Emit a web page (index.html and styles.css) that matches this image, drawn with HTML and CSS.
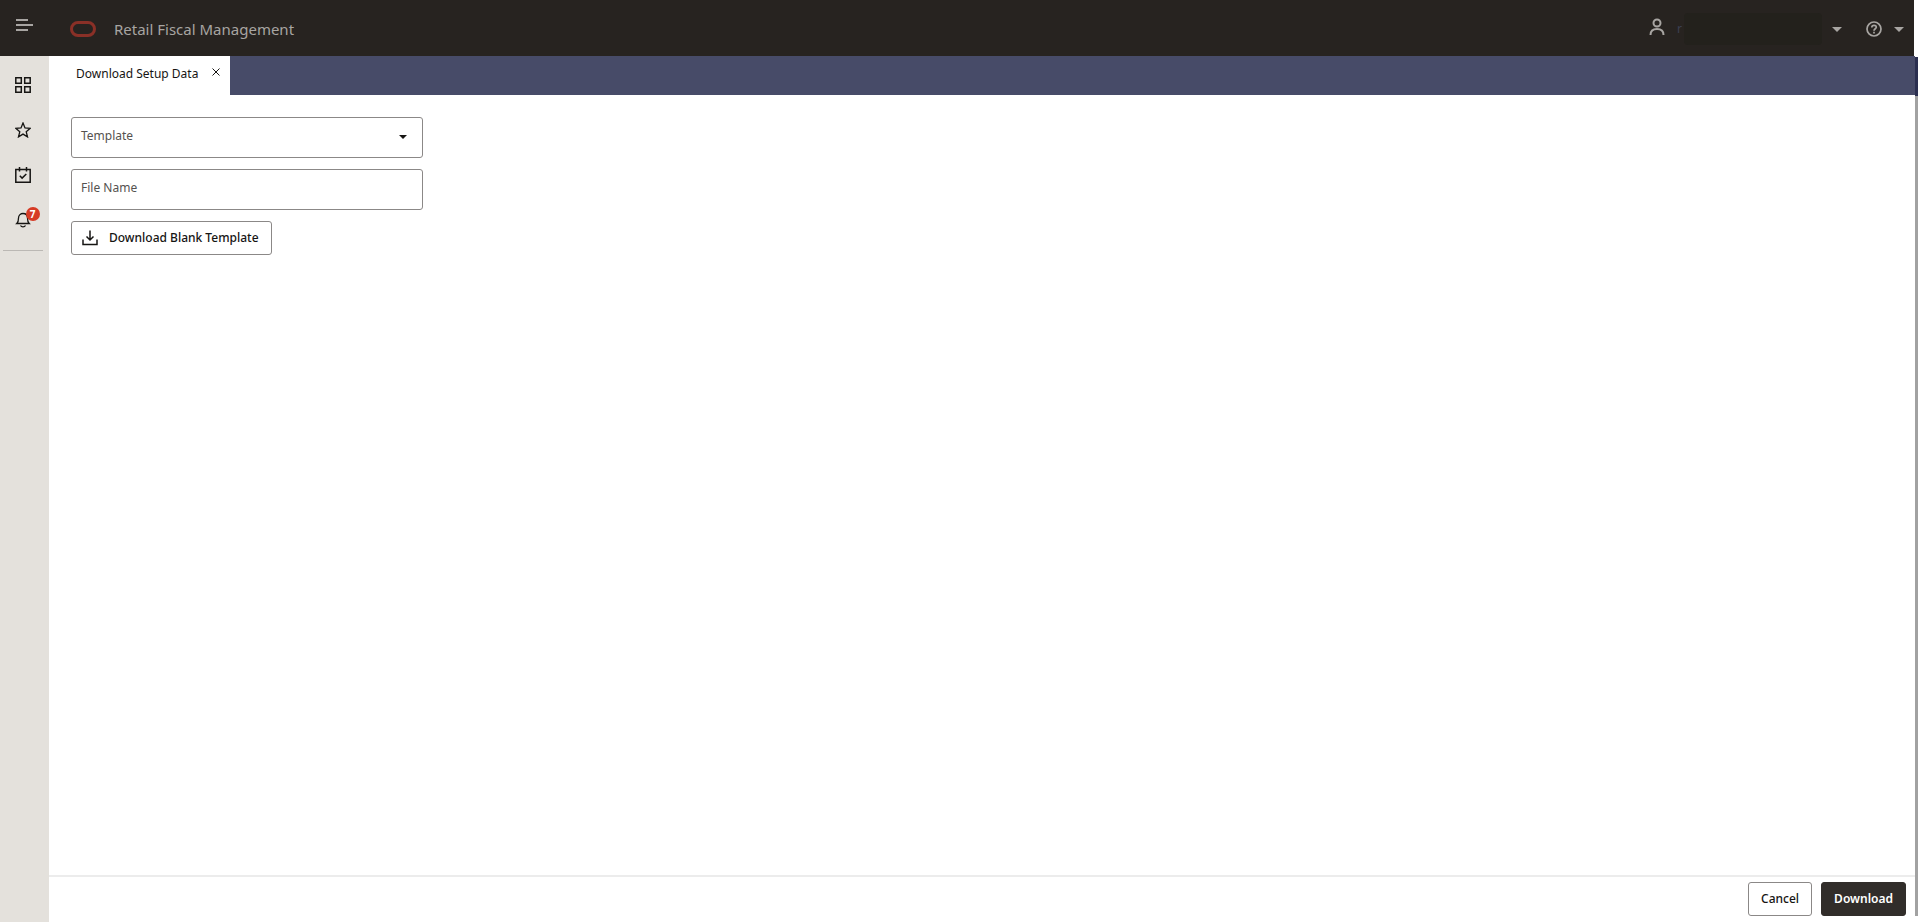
FILE: index.html
```html
<!DOCTYPE html>
<html lang="en">
<head>
    <meta charset="UTF-8">
    <meta name="viewport" content="width=device-width, initial-scale=1.0">
    <title>Retail Fiscal Management</title>
    <link rel="stylesheet" href="styles.css">
</head>
<body>
    <div class="app">
        <header class="header">
            <button type="button" class="icon-button menu-button" aria-label="Menu">
                <svg width="18" height="14" viewBox="0 0 18 14" fill="none" stroke="currentColor" stroke-width="2">
                    <path d="M0 2h12M0 7h17M0 12h12"/>
                </svg>
            </button>
            <svg class="logo" width="26" height="16" viewBox="0 0 26 16" fill="none" stroke="#8a3027" stroke-width="3">
                <rect x="1.5" y="1.5" width="23" height="13" rx="6.5"/>
            </svg>
            <h1 class="title">Retail Fiscal Management</h1>
            <button type="button" class="icon-button user-button" aria-label="User menu">
                <svg class="user-icon" width="16" height="18" viewBox="0 0 16 18" fill="none" stroke="currentColor" stroke-width="2">
                    <circle cx="8" cy="5" r="3.5"/>
                    <path d="M1.5 17c0-4 2.500-6 6.500-6s6.500 2 6.500 6"/>
                </svg>
                <span class="user-name">r</span>
                <span class="user-mask"></span>
                <svg class="caret" width="10" height="5" viewBox="0 0 10 5"><path d="M0 0h10L5 5z" fill="currentColor"/></svg>
            </button>
            <button type="button" class="icon-button help-button" aria-label="Help">
                <svg width="16" height="16" viewBox="0 0 16 16" fill="none" stroke="currentColor" stroke-width="1.700">
                    <circle cx="8" cy="8" r="7"/>
                    <path d="M5.800 6.500C5.800 3.600 10.300 3.600 10.300 6.300C10.300 7.800 8 7.800 8 9.700M8 10.800v1.600"/>
                </svg>
                <svg class="caret" width="10" height="5" viewBox="0 0 10 5"><path d="M0 0h10L5 5z" fill="currentColor"/></svg>
            </button>
        </header>

        <div class="body">
            <nav class="sidebar">
                <a href="#" class="nav-link" aria-label="Applications">
                    <svg width="16" height="16" viewBox="0 0 16 16" fill="none" stroke="currentColor" stroke-width="1.500">
                        <path d="M.8.800h5.500v5.500H.8zM9.700.800h5.500v5.500H9.700zM.8 9.700h5.500v5.500H.8zM9.700 9.700h5.500v5.500H9.700z"/>
                    </svg>
                </a>
                <a href="#" class="nav-link" aria-label="Favorites">
                    <svg width="16" height="16" viewBox="0 0 16 16" fill="none" stroke="currentColor" stroke-width="1.300">
                        <path d="M8 1l2 4.900 5.200.400-4 3.400 1.300 5.200L8 12.100l-4.500 2.800 1.300-5.200-4-3.400L6 5.900z"/>
                    </svg>
                </a>
                <a href="#" class="nav-link" aria-label="Tasks">
                    <svg width="16" height="16" viewBox="0 0 16 16" fill="none" stroke="currentColor" stroke-width="1.500">
                        <path d="M.8 2.500h14.400V15.200H.8zM4.500 0v4.500M11.500 0v4.500M4.800 8.800l2.300 2.300L11.300 7"/>
                    </svg>
                </a>
                <a href="#" class="nav-link" aria-label="Notifications">
                    <svg width="16" height="16" viewBox="0 0 16 16" fill="none" stroke="currentColor" stroke-width="1.300">
                        <path d="M1.800 11.500C3.500 10 3.500 8.500 3.500 6C3.500 0 12.500 0 12.500 6C12.500 8.500 12.500 10 14.200 11.500zM5.500 13.500C6.500 15.300 9.500 15.300 10.500 13.500"/>
                    </svg>
                    <span class="badge">7</span>
                </a>
                <hr class="nav-divider">
            </nav>

            <div class="content">
                <div class="tab-bar">
                    <div class="tab">
                        <span>Download Setup Data</span>
                        <button type="button" class="tab-close" aria-label="Close tab">
                            <svg width="8" height="8" viewBox="0 0 8 8" fill="none" stroke="currentColor"><path d="M.5.5l7 7M7.500.5l-7 7"/></svg>
                        </button>
                    </div>
                </div>

                <form class="form" id="download-form">
                    <div class="field">
                        <label for="template">Template</label>
                        <select id="template" name="template">
                            <option value=""></option>
                        </select>
                        <svg class="field-caret" width="8" height="4" viewBox="0 0 8 4"><path d="M0 0h8L4 4z" fill="currentColor"/></svg>
                    </div>
                    <div class="field">
                        <label for="file-name">File Name</label>
                        <input type="text" id="file-name" name="file-name">
                    </div>
                    <button type="button" class="button with-icon">
                        <svg width="16" height="16" viewBox="0 0 16 16" fill="none" stroke="currentColor" stroke-width="1.500">
                            <path d="M1 9.500V14.500H15V9.500M8 0.500V10M4.500 6.500L8 10L11.500 6.500"/>
                        </svg>
                        Download Blank Template
                    </button>
                </form>

                <footer class="footer">
                    <button type="button" class="button">Cancel</button>
                    <button type="submit" form="download-form" class="button primary">Download</button>
                </footer>
            </div>
        </div>
    </div>
    <div class="scroll-track">
        <div class="scroll-tabs"></div>
        <div class="scroll-thumb"></div>
    </div>
</body>
</html>
```
FILE: styles.css
```css
* {
    box-sizing: border-box;
}

body {
    display: flex;
    height: 100vh;
    margin: 0;
    font-family: "Noto Sans", "Open Sans", sans-serif;
    font-size: 12px;
    line-height: 18px;
    color: #161513;
    background-color: #fff;
}

button {
    font: inherit;
    cursor: pointer;
}

svg {
    display: block;
    flex: none;
}

.app {
    flex: 1;
    display: flex;
    flex-direction: column;
}

.header {
    display: flex;
    align-items: center;
    height: 56px;
    margin-right: 1px;
    padding: 2px 10px 0 16px;
    background-color: #272320;
    color: #a8a5a2;
}

.icon-button {
    display: flex;
    align-items: center;
    padding: 0;
    border: none;
    background: none;
    color: inherit;
}

.menu-button {
    padding-bottom: 8px;
}

.logo {
    margin-left: 36px;
}

.title {
    flex: 1;
    margin: 0 0 0 18px;
    font-size: 15px;
    line-height: 24px;
    font-weight: 400;
}

.user-icon {
    margin-bottom: 4px;
}

.user-name {
    margin-left: 12px;
    color: #3c4052;
}

.user-mask {
    width: 138px;
    height: 32px;
    margin: 0 10px 0 2px;
    border-radius: 4px;
    background-color: #23211c;
}

.help-button {
    gap: 12px;
    margin-left: 24px;
}

.body {
    flex: 1;
    display: flex;
}

.sidebar {
    display: flex;
    flex-direction: column;
    align-items: center;
    gap: 29px;
    width: 49px;
    padding: 21px 7px 0 3px;
    background-color: #e4e1dc;
}

.nav-link {
    position: relative;
    color: #161513;
}

.badge {
    position: absolute;
    top: -5px;
    left: 11px;
    width: 14px;
    height: 14px;
    border-radius: 50%;
    background-color: #d63b25;
    color: #fff;
    font-size: 10px;
    line-height: 14px;
    font-weight: 700;
    text-align: center;
}

.nav-divider {
    width: 40px;
    margin: -7px 0 0;
    border: none;
    border-top: 1px solid #bbb8b4;
}

.content {
    flex: 1;
    display: flex;
    flex-direction: column;
}

.tab-bar {
    display: flex;
    height: 39px;
    background-color: #474b68;
}

.tab {
    display: flex;
    align-items: center;
    gap: 14px;
    padding: 0 10px 4px 27px;
    background-color: #fff;
}

.tab-close {
    padding: 0 0 4px;
    border: none;
    background: none;
    color: #161513;
}

.form {
    flex: 1;
    display: flex;
    flex-direction: column;
    align-items: flex-start;
    gap: 11px;
    padding: 22px;
}

.field {
    position: relative;
    width: 352px;
    height: 41px;
}

.field label {
    position: absolute;
    top: 10px;
    left: 10px;
    color: #55524f;
    pointer-events: none;
}

.field input,
.field select {
    width: 100%;
    height: 100%;
    padding: 0 10px;
    border: 1px solid #8b8887;
    border-radius: 3px;
    background-color: #fff;
    font: inherit;
    appearance: none;
}

.field-caret {
    position: absolute;
    top: 18px;
    right: 16px;
    pointer-events: none;
}

.button {
    display: flex;
    align-items: center;
    gap: 11px;
    height: 34px;
    padding: 0 12px;
    border: 1px solid #8b8887;
    border-radius: 3px;
    background-color: #fff;
    color: #161513;
    font-weight: 500;
}

.with-icon {
    padding-left: 10px;
}

.primary {
    border-color: #312d2a;
    background-color: #312d2a;
    color: #fff;
    font-weight: 600;
}

.footer {
    display: flex;
    justify-content: flex-end;
    gap: 9px;
    padding: 5px 9px 6px;
    border-top: 2px solid #ececec;
}

.scroll-track {
    display: flex;
    flex-direction: column;
    width: 4px;
    padding: 57px 1px 6px 0;
}

.scroll-tabs {
    height: 39px;
    background-color: #2b2f50;
}

.scroll-thumb {
    flex: 1;
    background-color: #a2a2a2;
}
```
